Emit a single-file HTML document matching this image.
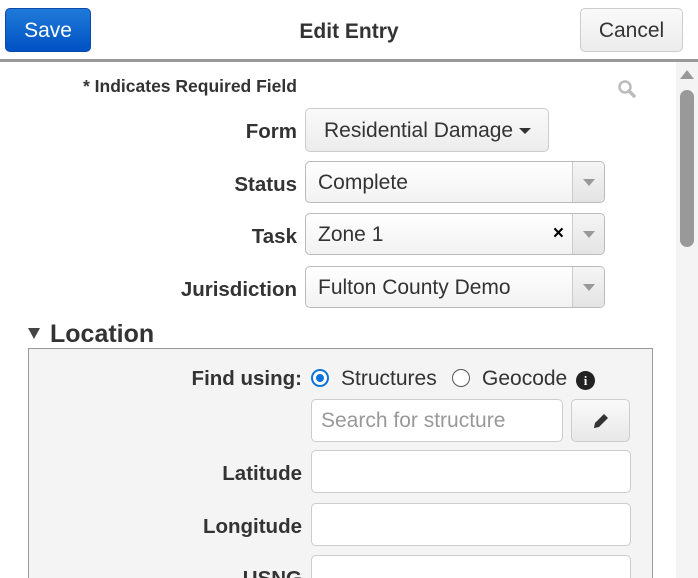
<!DOCTYPE html>
<html><head><style>
*{box-sizing:border-box;margin:0;padding:0}
html,body{width:698px;height:578px;overflow:hidden}
body{background:#fff;font-family:"Liberation Sans",Arial,sans-serif;color:#333;position:relative}
.a{position:absolute}
.lbl{position:absolute;font-weight:bold;font-size:20.5px;color:#333;text-align:right;white-space:nowrap}
.sel{position:absolute;left:305px;width:300px;height:42px;border:1px solid #bbb;border-radius:5px;background:linear-gradient(#fff,#f2f2f2);font-size:21px;color:#333;padding:9px 12px}
.sel .dd{position:absolute;right:0;top:0;width:32px;height:40px;border-left:1px solid #ccc;background:linear-gradient(#f5f5f5,#e4e4e4);border-radius:0 5px 5px 0}
.sel .dd:after{content:"";position:absolute;left:10px;top:17px;border-left:6px solid transparent;border-right:6px solid transparent;border-top:7px solid #999}
.inp{position:absolute;left:311px;width:320px;height:43px;border:1px solid #ccc;border-radius:5px;background:#fff}
</style></head><body>
<div class="a" style="left:5px;top:8px;width:86px;height:44px;border-radius:5px;background:linear-gradient(#1f7ad8,#0051c4);border:1px solid #0a4aa8;color:#fff;font-size:21px;padding-top:10px;text-align:center">Save</div>
<div class="a" style="left:0;top:20px;width:698px;text-align:center;font-size:21px;font-weight:bold;color:#333">Edit Entry</div>
<div class="a" style="left:580px;top:8px;width:103px;height:44px;border-radius:5px;background:linear-gradient(#fafafa,#ececec);border:1px solid #ccc;color:#333;font-size:21px;padding-top:10px;text-align:center">Cancel</div>
<div class="a" style="left:0;top:59px;width:698px;height:3px;background:#999"></div>
<div class="a" style="left:676px;top:62px;width:22px;height:516px;background:#f4f4f4"></div>
<div class="a" style="left:680px;top:70px;border-left:7px solid transparent;border-right:7px solid transparent;border-bottom:9px solid #999"></div>
<div class="a" style="left:680px;top:90px;width:14px;height:157px;border-radius:7px;background:#999"></div>
<div class="a" style="left:83px;top:76px;font-size:17.5px;font-weight:bold;color:#333">* Indicates Required Field</div>
<svg class="a" style="left:617px;top:79px" width="20" height="20" viewBox="0 0 20 20"><circle cx="8" cy="8" r="5.5" fill="none" stroke="#bbb" stroke-width="2.5"/><path d="M12 12l5 5" stroke="#bbb" stroke-width="3.5" stroke-linecap="round"/></svg>
<div class="lbl" style="right:401px;top:120px">Form</div>
<div class="a" style="left:305px;top:108px;width:244px;height:44px;border:1px solid #ccc;border-radius:5px;background:linear-gradient(#fafafa,#ececec);font-size:21px;padding:10px 0 0 18px;color:#333;white-space:nowrap">Residential Damage <span style="display:inline-block;border-left:6px solid transparent;border-right:6px solid transparent;border-top:6px solid #333;vertical-align:middle"></span></div>
<div class="lbl" style="right:401px;top:173px">Status</div>
<div class="sel" style="top:161px">Complete<div class="dd"></div></div>
<div class="lbl" style="right:401px;top:225px">Task</div>
<div class="sel" style="top:213px">Zone 1<span style="position:absolute;right:40px;top:9px;font-weight:bold;font-size:19px;color:#000">×</span><div class="dd"></div></div>
<div class="lbl" style="right:401px;top:278px">Jurisdiction</div>
<div class="sel" style="top:266px">Fulton County Demo<div class="dd"></div></div>
<div class="a" style="left:28px;top:328px;border-left:6px solid transparent;border-right:6px solid transparent;border-top:11px solid #444"></div>
<div class="a" style="left:50px;top:320px;font-size:25px;font-weight:bold;color:#333">Location</div>
<div class="a" style="left:28px;top:348px;width:625px;height:240px;border:1px solid #999;background:#f4f4f4"></div>
<div class="lbl" style="right:396px;top:367px">Find using:</div>
<div class="a" style="left:311px;top:369px;width:18px;height:18px;border-radius:50%;border:2px solid #0a74da;background:#fff"><div style="margin:3px;width:8px;height:8px;border-radius:50%;background:#0a74da"></div></div>
<div class="a" style="left:341px;top:367px;font-size:21px;color:#333">Structures</div>
<div class="a" style="left:452px;top:369px;width:18px;height:18px;border-radius:50%;border:1px solid #555;background:#fff"></div>
<div class="a" style="left:482px;top:367px;font-size:21px;color:#333">Geocode</div>
<div class="a" style="left:576px;top:371px;width:19px;height:19px;border-radius:50%;background:#222;color:#fff;font:bold 13px 'Liberation Serif',serif;text-align:center;line-height:19px">i</div>
<div class="a" style="left:311px;top:399px;width:252px;height:43px;border:1px solid #ccc;border-radius:5px;background:#fff;font-size:21px;color:#999;padding:9px 9px;white-space:nowrap">Search for structure</div>
<div class="a" style="left:571px;top:399px;width:59px;height:43px;border:1px solid #ccc;border-radius:5px;background:linear-gradient(#fafafa,#e8e8e8)"><svg style="position:absolute;left:19px;top:11px" width="20" height="20" viewBox="0 0 20 20"><path d="M3 17l1-5L13 3l4 4-9 9z" fill="#333"/><path d="M3 17l1-4 3 3z" fill="#333"/></svg></div>
<div class="lbl" style="right:396px;top:462px">Latitude</div>
<div class="inp" style="top:450px"></div>
<div class="lbl" style="right:396px;top:515px">Longitude</div>
<div class="inp" style="top:503px"></div>
<div class="lbl" style="right:396px;top:567px">USNG</div>
<div class="inp" style="top:555px"></div>
</body></html>
